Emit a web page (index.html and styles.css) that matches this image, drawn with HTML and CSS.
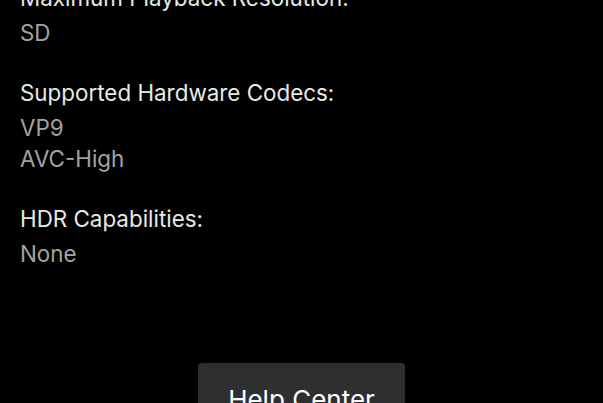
FILE: index.html
```html
<!DOCTYPE html>
<html>
<head>
<meta charset="utf-8">
<link rel="stylesheet" href="styles.css">
</head>
<body>
<main class="page">
  <section class="info">
    <div class="group">
      <div class="label">Maximum Playback Resolution:</div>
      <div class="value">SD</div>
    </div>
    <div class="group">
      <div class="label">Supported Hardware Codecs:</div>
      <div class="value">VP9</div>
      <div class="value">AVC-High</div>
    </div>
    <div class="group">
      <div class="label">HDR Capabilities:</div>
      <div class="value">None</div>
    </div>
  </section>
  <div class="actions">
    <button class="help">Help Center</button>
  </div>
</main>
</body>
</html>
```
FILE: styles.css
```css
html, body {
  margin: 0;
  padding: 0;
  background: #000;
  height: 100%;
  overflow: hidden;
}
.page {
  font-family: Inter, Roboto, "Liberation Sans", sans-serif;
  padding-left: 20px;
  padding-right: 20px;
  margin-top: -18px;
}
.info {
  display: flex;
  flex-direction: column;
  gap: 29px;
}
.label {
  color: #e8e8e8;
  font-size: 22.4px;
  line-height: 31px;
  margin-bottom: 4px;
}
.value {
  color: #a3a3a3;
  font-size: 22.4px;
  line-height: 31px;
}
.actions {
  display: flex;
  justify-content: center;
  margin-top: 94px;
}
.help {
  width: 207px;
  height: 60px;
  background: #2f2f2f;
  color: #fff;
  border: none;
  border-radius: 4px;
  font-family: Inter, Roboto, "Liberation Sans", sans-serif;
  font-size: 26px;
  line-height: 30px;
  padding: 13px 0 0;
  display: block;
  text-align: center;
  align-self: flex-start;
}
```
